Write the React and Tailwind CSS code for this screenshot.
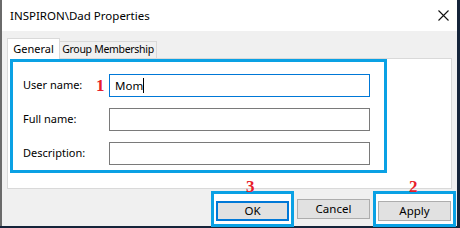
import React from "react";

const font = { fontFamily: '"Noto Sans", "Open Sans", Arial, sans-serif' };

const Field = ({ label, value, focused }) => (
  <div className="flex items-center h-[23px]">
    <label className="w-[86px] text-[11px] text-black">{label}</label>
    <div
      className={
        "w-[261px] h-[23px] bg-white border flex items-center px-[5px] text-[11.5px] text-black " +
        (focused ? "border-[#0078d7]" : "border-[#7a7a7a]")
      }
    >
      {value}
      {focused && <span className="inline-block w-px h-[15px] bg-black" />}
    </div>
  </div>
);

const Marker = ({ children, className }) => (
  <span
    className={"absolute text-[17px] font-bold leading-none text-[#e8202a] " + className}
    style={{ fontFamily: '"Liberation Serif", serif' }}
  >
    {children}
  </span>
);

export default function App() {
  return (
    <div className="w-[460px] h-[228px] bg-[#15243a] overflow-hidden" style={font}>
      <div className="relative w-[457px] h-[226px] bg-[#f0f0f0] border-l-2 border-[#6a6a6a] flex flex-col">
        {/* Title bar */}
        <div className="h-[31px] bg-white flex items-center justify-between pl-[8px] pr-[8px] shrink-0">
          <span className="text-[11.5px] text-black">INSPIRON\Dad Properties</span>
          <svg width="11" height="11" viewBox="0 0 11 11">
            <path d="M0.5 0.5 L10.5 10.5 M10.5 0.5 L0.5 10.5" stroke="#111" strokeWidth="1.1" />
          </svg>
        </div>

        {/* Tabs */}
        <div className="flex items-end h-[27px] pl-[5px] shrink-0">
          <div className="h-[21px] w-[53px] bg-white border border-b-0 border-[#d9d9d9] flex items-center justify-center text-[11px] text-black whitespace-nowrap relative top-px z-10">
            General
          </div>
          <div className="h-[17px] w-[97px] bg-[#f0f0f0] border border-b-0 border-l-0 border-[#d9d9d9] flex items-center justify-center text-[10.5px] tracking-[-0.3px] text-black whitespace-nowrap overflow-hidden">
            Group Membership
          </div>
        </div>

        {/* Panel */}
        <div className="h-[131px] ml-[5px] mr-[5px] bg-white border border-[#d9d9d9] pl-[2px] shrink-0">
          <div className="relative w-[377px] h-[114px] border-[3px] border-[#0aa1e4] pl-[10px] pt-[12px] flex flex-col gap-[11px]">
            <Field label="User name:" value="Mom" focused />
            <Field label="Full name:" value="" />
            <Field label="Description:" value="" />
            <Marker className="left-[83px] top-[15px]">1</Marker>
          </div>
        </div>

        {/* Buttons */}
        <div className="flex justify-end items-center gap-[3px] pr-px mt-[2px] relative">
          <div className="border-[3px] border-[#0aa1e4] bg-white px-[2px] py-[3px]">
            <button className="w-[73px] h-[20px] bg-[#e1e1e1] border-2 border-[#0078d7] text-[11.5px] text-black leading-none">
              OK
            </button>
          </div>
          <button className="w-[73px] h-[20px] bg-[#e1e1e1] border border-[#adadad] text-[11.5px] text-black leading-none">
            Cancel
          </button>
          <div className="border-[3px] border-[#0aa1e4] bg-white px-[2px] py-[3px]">
            <button className="w-[73px] h-[20px] bg-[#e1e1e1] border border-[#adadad] text-[11.5px] text-black leading-none">
              Apply
            </button>
          </div>
          <Marker className="left-[244px] -top-[13px]">3</Marker>
          <Marker className="left-[407px] -top-[13px]">2</Marker>
        </div>
      </div>
    </div>
  );
}
